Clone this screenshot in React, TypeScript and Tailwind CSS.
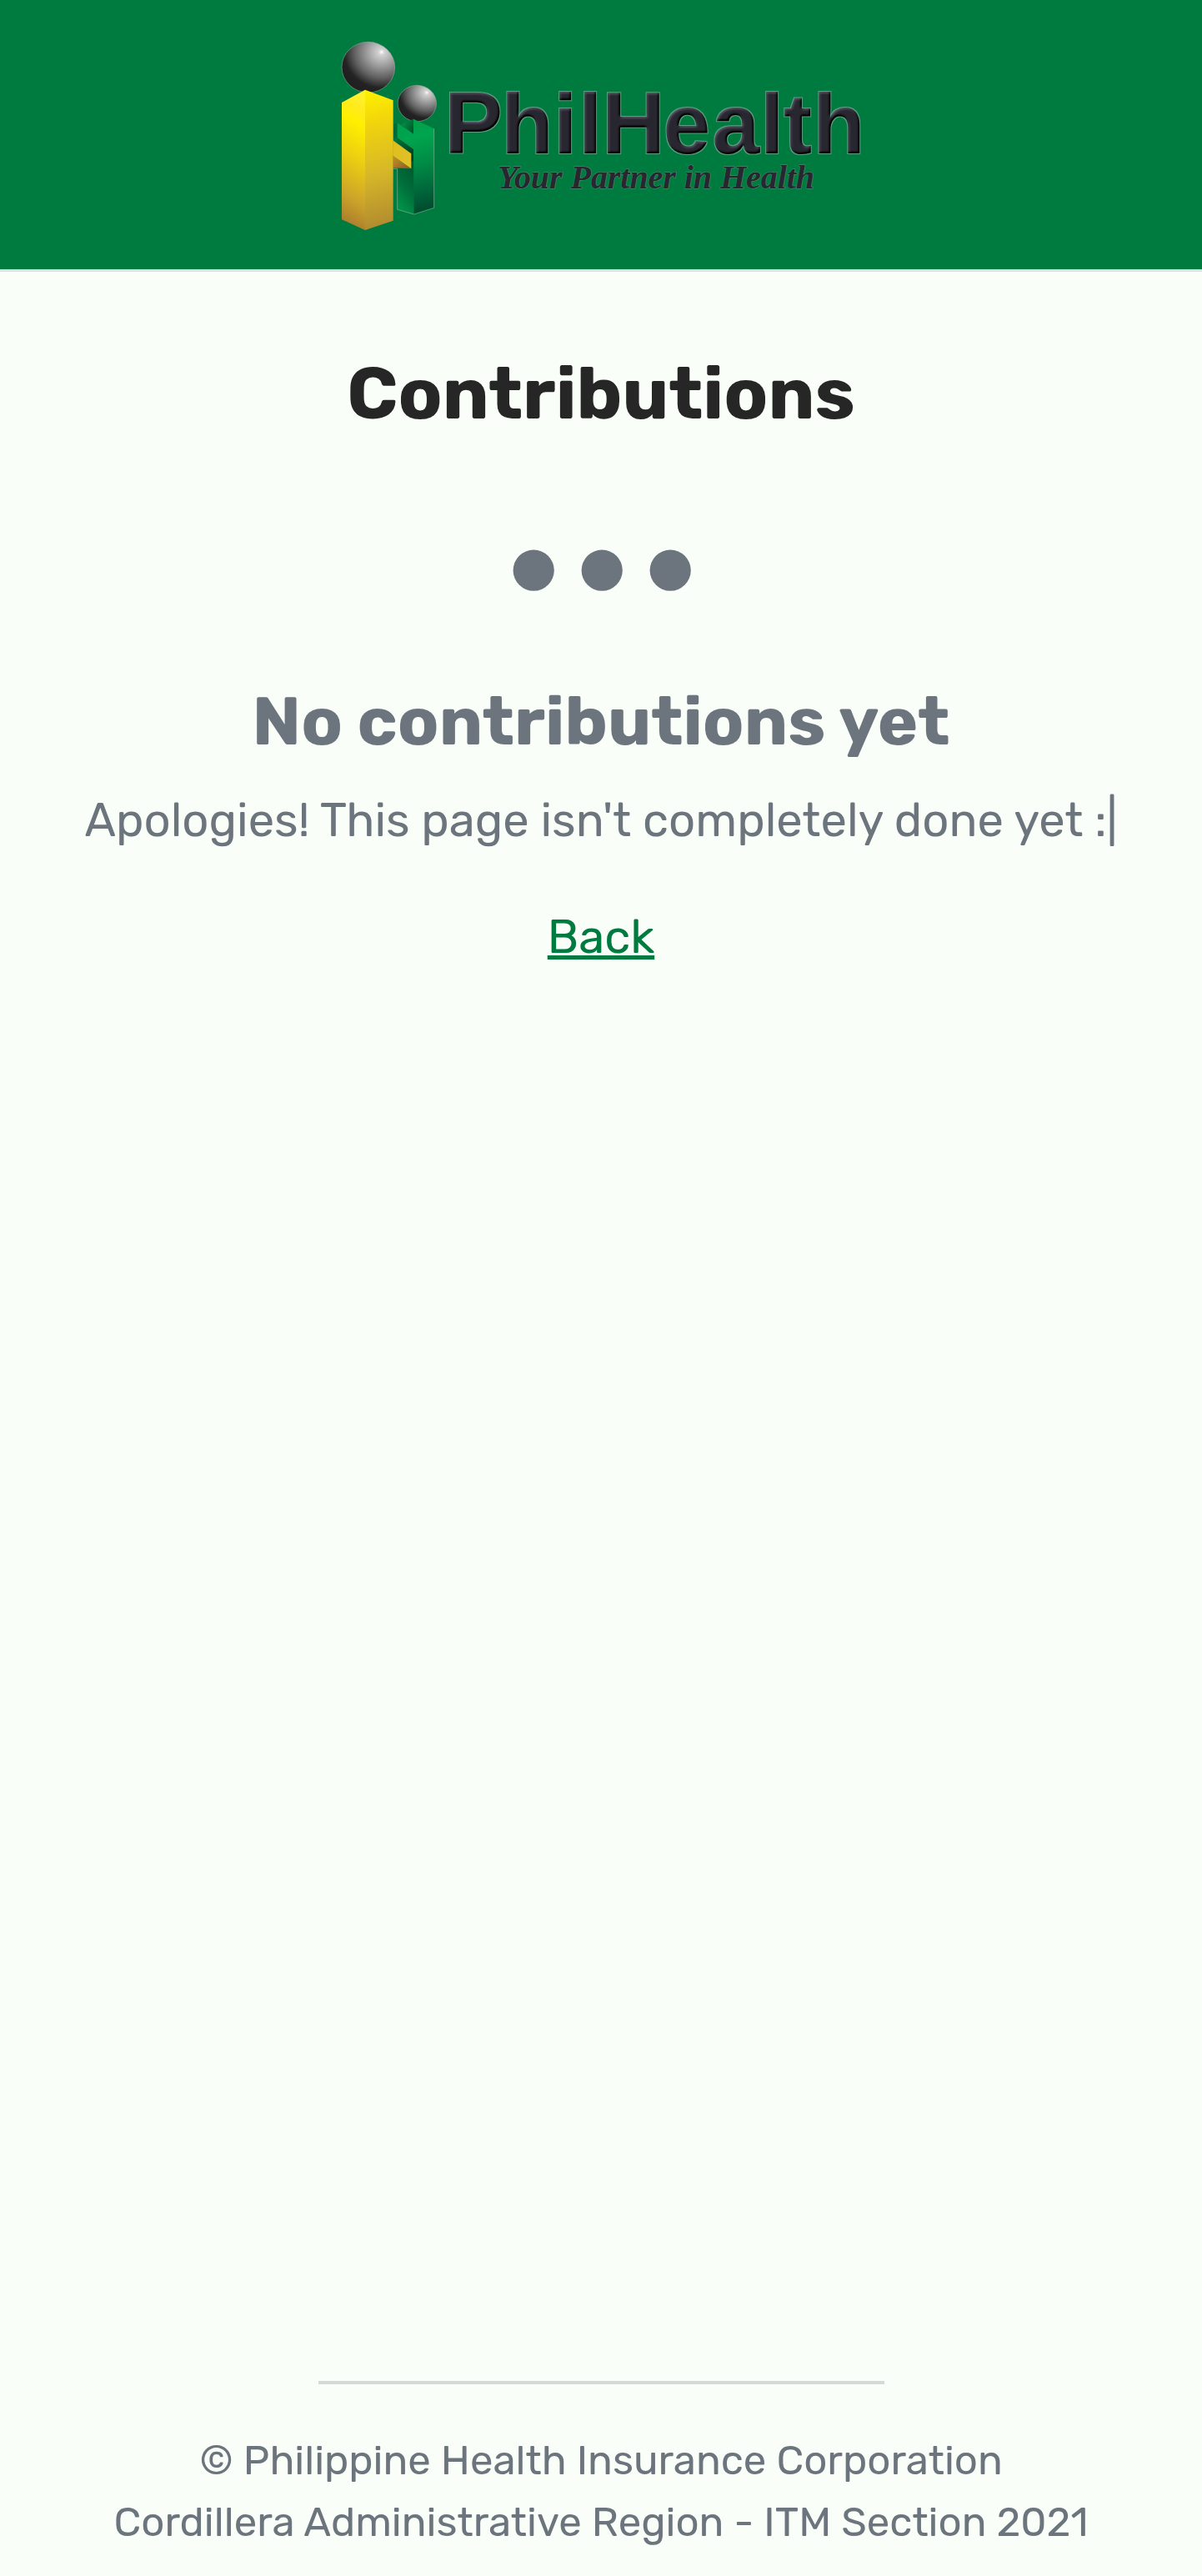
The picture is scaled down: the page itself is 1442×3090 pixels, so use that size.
import React from "react";

function PhilHealthLogo() {
  return (
    <svg className="block" width="628" height="232" viewBox="407 48 628 232" role="img" aria-label="PhilHealth">
      <defs>
        <radialGradient id="ball" cx="0.75" cy="0.2" r="0.82">
          <stop offset="0" stopColor="#ffffff" />
          <stop offset="0.07" stopColor="#d2d2d2" />
          <stop offset="0.35" stopColor="#9a9a9a" />
          <stop offset="0.62" stopColor="#616161" />
          <stop offset="0.86" stopColor="#242323" />
          <stop offset="1" stopColor="#211f20" />
        </radialGradient>
        <linearGradient id="yellowLeft" x1="0.35" y1="0" x2="0.25" y2="1">
          <stop offset="0" stopColor="#fff02c" />
          <stop offset="0.1" stopColor="#ffea1c" />
          <stop offset="0.2" stopColor="#fff000" />
          <stop offset="0.45" stopColor="#edd010" />
          <stop offset="0.75" stopColor="#cda42a" />
          <stop offset="1" stopColor="#a3762e" />
        </linearGradient>
        <linearGradient id="yellowRight" x1="0.3" y1="0" x2="0.35" y2="1">
          <stop offset="0" stopColor="#fff000" />
          <stop offset="0.22" stopColor="#f2d60c" />
          <stop offset="0.6" stopColor="#d6b728" />
          <stop offset="1" stopColor="#b08a30" />
        </linearGradient>
        <linearGradient id="arm" x1="0" y1="0" x2="1" y2="1">
          <stop offset="0" stopColor="#dfbd1d" />
          <stop offset="1" stopColor="#e0c22a" />
        </linearGradient>
        <linearGradient id="armUnder" x1="0" y1="0" x2="1" y2="1">
          <stop offset="0" stopColor="#c29226" />
          <stop offset="1" stopColor="#8a5a28" />
        </linearGradient>
        <linearGradient id="greenRight" x1="0.4" y1="0" x2="0.5" y2="1">
          <stop offset="0" stopColor="#00a04a" />
          <stop offset="0.2" stopColor="#00a54f" />
          <stop offset="0.5" stopColor="#008a45" />
          <stop offset="0.8" stopColor="#00633a" />
          <stop offset="1" stopColor="#004a2c" />
        </linearGradient>
        <linearGradient id="greenLeft" x1="0.7" y1="0" x2="0.3" y2="1">
          <stop offset="0" stopColor="#00582f" />
          <stop offset="0.5" stopColor="#00703b" />
          <stop offset="1" stopColor="#009549" />
        </linearGradient>
        <linearGradient id="greenNotch" x1="0" y1="0.2" x2="1" y2="0.9">
          <stop offset="0" stopColor="#009a4a" />
          <stop offset="1" stopColor="#004f2a" />
        </linearGradient>
        <linearGradient id="greenShadow" x1="0" y1="0" x2="1" y2="1">
          <stop offset="0" stopColor="#007a3d" />
          <stop offset="1" stopColor="#002f17" />
        </linearGradient>
        <filter id="emboss" x="-5%" y="-10%" width="110%" height="120%" colorInterpolationFilters="sRGB">
          <feGaussianBlur in="SourceAlpha" stdDeviation="1.4" result="soft" />
          <feDiffuseLighting in="soft" surfaceScale="1.1" diffuseConstant="1" lightingColor="#736d87" result="lit">
            <feDistantLight azimuth="235" elevation="20.5" />
          </feDiffuseLighting>
          <feComposite in="lit" in2="SourceAlpha" operator="in" result="face" />
          <feMorphology in="SourceAlpha" operator="dilate" radius="0.5" result="grown" />
          <feFlood floodColor="#a9bcb1" floodOpacity="0.55" />
          <feComposite in2="grown" operator="in" result="rim" />
          <feMerge>
            <feMergeNode in="rim" />
            <feMergeNode in="face" />
          </feMerge>
        </filter>
      </defs>

      <g transform="translate(390 30) scale(0.33333)">
        <ellipse cx="331" cy="282" rx="69.5" ry="65" fill="url(#ball)" stroke="#9fb5a8" strokeWidth="1.5" />
        <path d="M246 358 260 351V405L246 409Z" fill="#006b38" />
        <path d="M274 358 318 338V392Z" fill="url(#greenNotch)" />
        <path d="M246 409 262 404 318 447V517H260V460Z" fill="url(#greenShadow)" />
        <path d="M260 490H320V681L260 664Z" fill="url(#greenLeft)" />
        <path d="M318 338 392 373V658L320 681 318 447 260 405V352L318 392Z" fill="url(#greenRight)" />
        <path d="M392 373V658L320 681 260 664V517H245" fill="none" stroke="#a8c9b5" strokeWidth="2" strokeOpacity="0.75" />

        <ellipse cx="155.500" cy="152" rx="95.500" ry="91" fill="url(#ball)" stroke="#9fb5a8" strokeWidth="1.5" />
        <path d="M245 470 309 517 245 514Z" fill="url(#armUnder)" />
        <path d="M244 415 310 463V517L244 470Z" fill="url(#arm)" />
        <path d="M144 233 60 279V700L144 738Z" fill="url(#yellowLeft)" />
        <path d="M144 233 245 271V704L144 738Z" fill="url(#yellowRight)" />
      </g>

      <text
        className="font-['Liberation_Sans'] font-bold"
        filter="url(#emboss)"
        x="533 601.3 664 694 722 795.5 854.500 912 940 975.3"
        y="184.4"
        fontSize="102"
        fill="#28262f"
      >
        <tspan fontSize="105">P</tspan>hil<tspan fontSize="105">H</tspan>ealth
      </text>
      <text
        className="font-['Liberation_Serif'] font-bold italic"
        x="597"
        y="225.500"
        fontSize="40"
        textLength="380"
        fill="#28262f"
        stroke="#a9a3b0"
        strokeOpacity="0.5"
        strokeWidth="1"
        paintOrder="stroke"
      >
        Your Partner in Health
      </text>
    </svg>
  );
}

function ThreeDots() {
  return (
    <svg className="block size-[262.4px]" viewBox="0 0 16 16" fill="currentColor" aria-hidden="true">
      <circle cx="3" cy="8" r="1.5" />
      <circle cx="8" cy="8" r="1.5" />
      <circle cx="13" cy="8" r="1.5" />
    </svg>
  );
}

export default function App() {
  return (
    <div className="flex h-[3090px] flex-col bg-[#f9fef8] font-['Rubik','Roboto',sans-serif] text-[56.15px] leading-[84px] text-[#6c757d]">
      <header className="flex h-[326px] shrink-0 justify-center border-b-[3px] border-[#dee2e6] bg-[#007b40] pt-12">
        <PhilHealthLogo />
      </header>

      <main className="flex grow flex-col items-center pt-[94px] text-center">
        <h1 className="text-[87.2px] leading-[104.6px] font-bold text-[#262626]">Contributions</h1>
        <div className="mt-[28px] pl-[3px]">
          <ThreeDots />
        </div>
        <h2 className="mt-px text-[81.7px] leading-[98px] font-bold">No contributions yet</h2>
        <p className="mt-7">Apologies! This page isn't completely done yet :|</p>
        <a href="#" className="mt-14 text-[#007b40] underline">
          Back
        </a>
      </main>

      <footer className="flex shrink-0 flex-col items-center pb-[28px] text-center text-[49.15px] leading-[74px]">
        <hr className="mb-[54px] h-1 w-[679px] border-0 bg-[#d5dad8]" />
        <p>© Philippine Health Insurance Corporation</p>
        <p>Cordillera Administrative Region - ITM Section 2021</p>
      </footer>
    </div>
  );
}
